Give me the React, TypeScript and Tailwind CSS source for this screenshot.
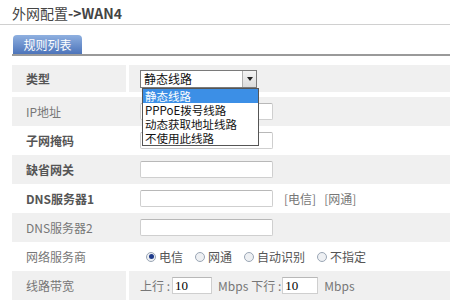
import React from 'react';

const font = { fontFamily: '"Noto Sans CJK SC", "Liberation Sans", sans-serif' };

function TextInput({ w = 'w-[133px]' }: { w?: string }) {
  return <div className={`${w} h-[17px] bg-white border border-[#cfcfcf] border-t-[#b8b8b8] rounded-[2px]`} />;
}

function Radio({ checked, label }: { checked?: boolean; label: string }) {
  return (
    <div className="flex items-center gap-[3px]">
      <span className="w-[10px] h-[10px] rounded-full border border-[#9aa6b5] bg-[#eef0f3] flex items-center justify-center">
        {checked && <span className="w-[5px] h-[5px] rounded-full bg-[#1e3a8a]" />}
      </span>
      <span className="text-[12px] text-[#555]">{label}</span>
    </div>
  );
}

function Row({
  label,
  gray,
  bold,
  split,
  h = 'h-[29px]',
  children,
}: {
  label: string;
  gray?: boolean;
  bold?: boolean;
  split?: boolean;
  h?: string;
  children?: React.ReactNode;
}) {
  const bg = gray ? 'bg-[#f0f0f0]' : 'bg-white';
  return (
    <div className={`flex ${h}`}>
      <div className={`w-[114px] ${bg} flex items-center pl-[14px] text-[12px] ${bold ? 'font-semibold text-[#555]' : 'text-[#777]'}`}>
        {label}
      </div>
      <div className={`w-[3px] ${split ? 'bg-white' : bg}`} />
      <div className={`flex-1 ${bg} flex items-center pl-[11px]`}>{children}</div>
    </div>
  );
}

export default function App() {
  return (
    <div className="w-[450px] h-[300px] overflow-hidden bg-white relative" style={font}>
      <div className="h-[24px] pt-[4px] pl-[12px] text-[14px] leading-[18px] text-[#444]">
        外网配置<span className="font-semibold">-&gt;WAN4</span>
      </div>
      <div className="h-px bg-[#d0d0d0]" />
      <div className="mt-[10px] pl-[13px] flex">
        <div className="w-[69px] h-[19px] rounded-t-[4px] bg-gradient-to-b from-[#8fb0e0] to-[#4d74ba] text-white text-[12px] leading-[19px] text-center">
          规则列表
        </div>
      </div>
      <div className="ml-[12px] h-[2px] bg-[#9a9a9a]" />
      <div className="mt-[9px] ml-[12px]">
        <div className="mb-[5px]">
          <Row label="类型" gray bold split h="h-[27px]">
            <div className="w-[117px] h-[18px] bg-white border border-[#7a7a7a] flex items-center justify-between">
              <span className="pl-[3px] text-[12px] text-[#111]">静态线路</span>
              <span className="w-[14px] h-[16px] bg-gradient-to-b from-[#f4f4f4] to-[#dcdcdc] border-l border-[#b0b0b0] flex items-center justify-center">
                <span className="w-0 h-0 border-l-[3px] border-r-[3px] border-t-[4px] border-l-transparent border-r-transparent border-t-[#222]" />
              </span>
            </div>
          </Row>
        </div>
        <Row label="IP地址" gray>
          <TextInput />
        </Row>
        <Row label="子网掩码" bold>
          <TextInput />
        </Row>
        <Row label="缺省网关" gray bold>
          <TextInput />
        </Row>
        <Row label="DNS服务器1" bold>
          <TextInput />
          <span className="ml-[11px] text-[12px] text-[#777]">[电信]</span>
          <span className="ml-[8px] text-[12px] text-[#777]">[网通]</span>
        </Row>
        <Row label="DNS服务器2" gray>
          <TextInput />
        </Row>
        <Row label="网络服务商">
          <div className="flex items-center gap-[12px] pl-[6px]">
            <Radio checked label="电信" />
            <Radio label="网通" />
            <Radio label="自动识别" />
            <Radio label="不指定" />
          </div>
        </Row>
        <Row label="线路带宽" gray split>
          <div className="flex items-center text-[12px] text-[#777]">
            <span>上行 :</span>
            <div className="ml-[2px] w-[40px] h-[17px] bg-white border border-[#cfcfcf] border-t-[#b8b8b8] text-[13px] leading-[15px] pl-[2px] text-black" style={{ fontFamily: '"Liberation Serif", serif' }}>
              10
            </div>
            <span className="ml-[6px]">Mbps</span>
            <span className="ml-[3px]">下行 :</span>
            <div className="ml-[1px] w-[36px] h-[17px] bg-white border border-[#cfcfcf] border-t-[#b8b8b8] text-[13px] leading-[15px] pl-[2px] text-black" style={{ fontFamily: '"Liberation Serif", serif' }}>
              10
            </div>
            <span className="ml-[6px]">Mbps</span>
          </div>
        </Row>
      </div>
      <div className="absolute left-[142px] top-[88px] w-[117px] bg-white border border-[#555] text-[11.5px] leading-[14px] text-[#111]">
        <div className="h-[14px] bg-[#3c8fe6] text-white pl-[2px]">静态线路</div>
        <div className="h-[14px] pl-[2px]">PPPoE拨号线路</div>
        <div className="h-[14px] pl-[2px]">动态获取地址线路</div>
        <div className="h-[14px] pl-[2px]">不使用此线路</div>
      </div>
    </div>
  );
}
